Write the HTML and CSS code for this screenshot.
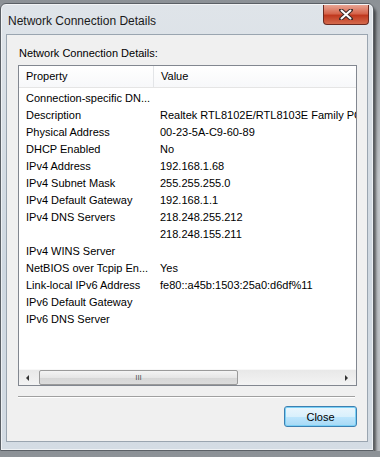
FILE: index.html
```html
<!DOCTYPE html>
<html lang="en">
<head>
  <meta charset="UTF-8">
  <title>Network Connection Details</title>
  <link rel="stylesheet" href="styles.css">
</head>
<body>
  <div class="window">
    <div class="titlebar">
      <span class="title">Network Connection Details</span>
      <div class="close-x">
        <svg width="14" height="11" viewBox="0 0 14 11">
          <path d="M2 1 L12 10 M12 1 L2 10" stroke="#3a2a28" stroke-width="4" stroke-linecap="round"/>
          <path d="M2.5 1.5 L11.5 9.5 M11.5 1.5 L2.5 9.5" stroke="#fff" stroke-width="2" stroke-linecap="round"/>
        </svg>
      </div>
    </div>

    <div class="client">
      <p class="label">Network Connection Details:</p>

      <div class="list">
        <div class="list-head">
          <div class="col-prop">Property</div>
          <div class="col-val">Value</div>
        </div>
        <div class="list-body">
          <div class="row"><div class="col-prop">Connection-specific DN...</div><div class="col-val"></div></div>
          <div class="row"><div class="col-prop">Description</div><div class="col-val">Realtek RTL8102E/RTL8103E Family PC</div></div>
          <div class="row"><div class="col-prop">Physical Address</div><div class="col-val">00-23-5A-C9-60-89</div></div>
          <div class="row"><div class="col-prop">DHCP Enabled</div><div class="col-val">No</div></div>
          <div class="row"><div class="col-prop">IPv4 Address</div><div class="col-val">192.168.1.68</div></div>
          <div class="row"><div class="col-prop">IPv4 Subnet Mask</div><div class="col-val">255.255.255.0</div></div>
          <div class="row"><div class="col-prop">IPv4 Default Gateway</div><div class="col-val">192.168.1.1</div></div>
          <div class="row"><div class="col-prop">IPv4 DNS Servers</div><div class="col-val">218.248.255.212</div></div>
          <div class="row"><div class="col-prop"></div><div class="col-val">218.248.155.211</div></div>
          <div class="row"><div class="col-prop">IPv4 WINS Server</div><div class="col-val"></div></div>
          <div class="row"><div class="col-prop">NetBIOS over Tcpip En...</div><div class="col-val">Yes</div></div>
          <div class="row"><div class="col-prop">Link-local IPv6 Address</div><div class="col-val">fe80::a45b:1503:25a0:d6df%11</div></div>
          <div class="row"><div class="col-prop">IPv6 Default Gateway</div><div class="col-val"></div></div>
          <div class="row"><div class="col-prop">IPv6 DNS Server</div><div class="col-val"></div></div>
        </div>
        <div class="hscroll">
          <span class="arrow arrow-left"></span>
          <div class="track">
            <div class="thumb"><span class="grip">III</span></div>
          </div>
          <span class="arrow arrow-right"></span>
        </div>
      </div>

      <div class="separator"></div>

      <div class="buttons">
        <button class="btn">Close</button>
      </div>
    </div>
  </div>
</body>
</html>
```

FILE: styles.css
```css
body {
  margin: 0;
  background: linear-gradient(to bottom, #8c9196, #c4c8cc 40%, #b9bdc1);
  font-family: 'Liberation Sans', Arial, sans-serif;
  font-size: 11px;
  color: #000;
  overflow: hidden;
}
.window {
  margin-top: 3px;
  width: 372px;
  height: 446px;
  border: 1px solid #5b6066;
  border-radius: 6px 6px 0 0;
  background: linear-gradient(to bottom, #dfe4e9, #cfd8e1 60%, #d4dce4);
  box-shadow: 2px 4px 3px rgba(0, 0, 0, 0.55), inset 0 0 0 1px rgba(255, 255, 255, 0.6);
}
.titlebar {
  height: 30px;
  display: flex;
  align-items: flex-start;
  justify-content: space-between;
}
.title {
  margin: 10px 0 0 7px;
  font-size: 12px;
  color: #1a1a1a;
}
.close-x {
  width: 44px;
  height: 19px;
  margin: 1px 4px 0 0;
  border: 1px solid #6b2a20;
  border-top: 0;
  border-radius: 0 0 4px 4px;
  background: linear-gradient(to bottom, #e8a493, #d6664d 45%, #c0391f 55%, #d46a4c);
  display: flex;
  align-items: center;
  justify-content: center;
}
.client {
  margin: 0 5px 0 5px;
  height: 406px;
  border: 1px solid #9aa5b0;
  background: #f0f0f0;
  padding: 0 10px 0 11px;
}
.label {
  margin: 12px 0 5px 1px;
  line-height: 13px;
}
.list {
  height: 319px;
  border: 1px solid #828790;
  background: #fff;
  display: flex;
  flex-direction: column;
  overflow: hidden;
}
.list-head {
  height: 21px;
  display: flex;
  border-bottom: 1px solid #e5e5e5;
  background: linear-gradient(to bottom, #fff, #f7f8fa);
}
.list-head .col-prop {
  border-right: 1px solid #e3e5e8;
  line-height: 20px;
}
.list-head .col-val {
  line-height: 20px;
}
.col-prop {
  width: 127px;
  flex: none;
  padding-left: 7px;
  white-space: nowrap;
  overflow: hidden;
}
.col-val {
  padding-left: 7px;
  white-space: nowrap;
}
.list-body {
  flex: 1;
  padding-top: 2px;
}
.row {
  display: flex;
  height: 17px;
  line-height: 17px;
}
.hscroll {
  height: 15px;
  display: flex;
  align-items: center;
  background: linear-gradient(to bottom, #e8e8e8, #f3f3f3);
  border-top: 1px solid #f8f8f8;
}
.arrow {
  width: 0;
  height: 0;
  border-top: 3px solid transparent;
  border-bottom: 3px solid transparent;
}
.arrow-left {
  margin: 0 10px 0 7px;
  border-right: 3px solid #333;
}
.arrow-right {
  margin: 0 8px 0 7px;
  border-left: 3px solid #333;
}
.track {
  flex: 1;
  height: 15px;
}
.thumb {
  width: 197px;
  height: 13px;
  border: 1px solid #9a9a9a;
  border-radius: 2px;
  background: linear-gradient(to bottom, #f4f4f4, #e6e6e6 50%, #d6d6d6 51%, #dcdcdc);
  display: flex;
  align-items: center;
  justify-content: center;
}
.grip {
  font-size: 8px;
  color: #555;
}
.separator {
  margin: 10px 2px 0 0;
  border-top: 1px solid #a0a0a0;
  border-bottom: 1px solid #fff;
}
.buttons {
  display: flex;
  justify-content: flex-end;
  padding: 8px 0 0 0;
}
.btn {
  width: 73px;
  height: 21px;
  border: 1px solid #3c7fb1;
  border-radius: 3px;
  background: linear-gradient(to bottom, #eaf6fd, #d9f0fc 50%, #bee6fd 51%, #a7d9f5);
  box-shadow: inset 0 0 0 1px #7bd0f5;
  font-family: 'Liberation Sans', Arial, sans-serif;
  font-size: 11px;
  color: #000;
  padding: 0;
}
```
